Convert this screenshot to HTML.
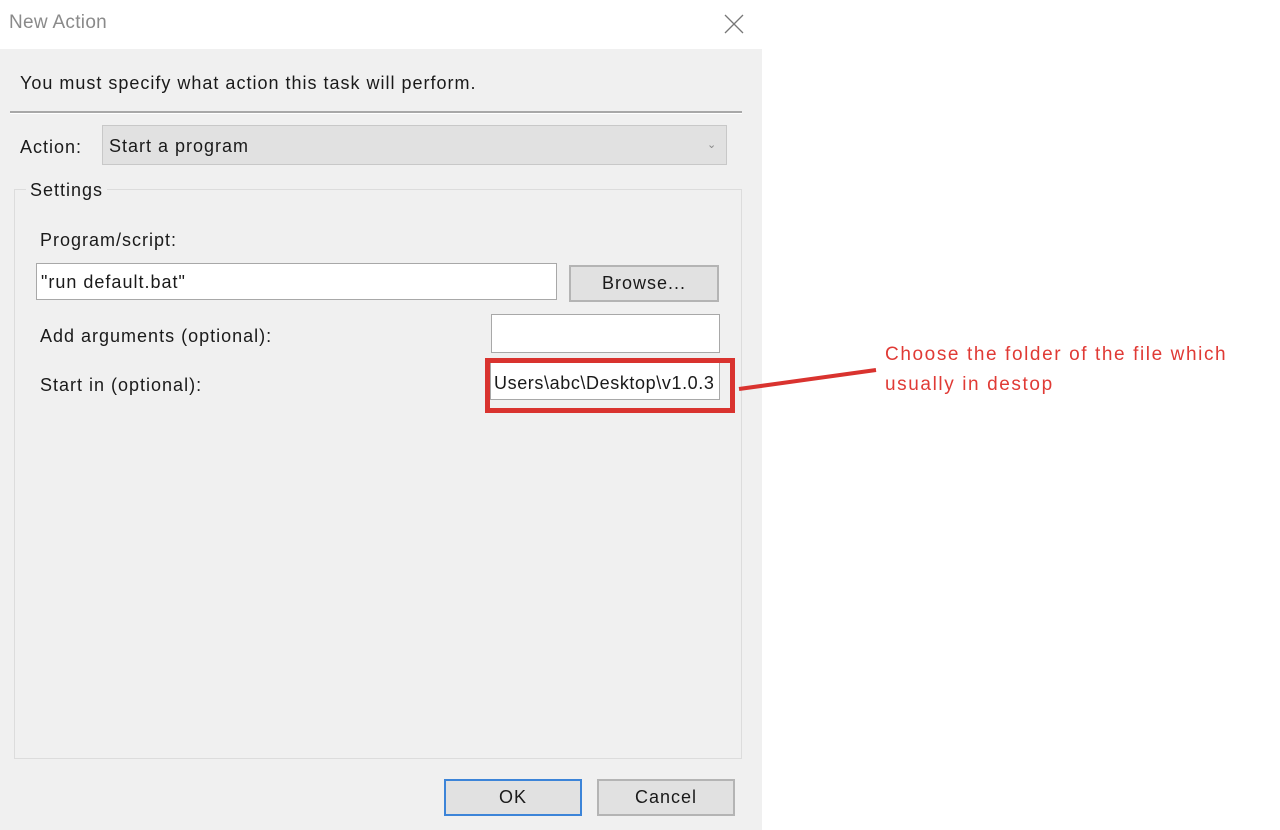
<!DOCTYPE html>
<html><head><style>
body{margin:0;width:1280px;height:830px;background:#fff;position:relative;overflow:hidden;font-family:"Liberation Sans",sans-serif;color:#1a1a1a}
.a{position:absolute}
.t{font-size:18px;white-space:nowrap;letter-spacing:1px}
.inp{position:absolute;background:#fff;border:1px solid #a8a8a8;box-sizing:border-box}
.btn{position:absolute;background:#e1e1e1;border:2px solid #b4b4b4;box-sizing:border-box;text-align:center;font-size:18px;letter-spacing:1px}
</style></head><body>
<div class="a t" style="left:9px;top:12px;color:#8a8a8a;font-size:19px;letter-spacing:0.3px">New Action</div>
<svg class="a" style="left:724px;top:14px" width="20" height="20"><path d="M1 1L19 19M19 1L1 19" stroke="#777" stroke-width="1.3"/></svg>
<div class="a" style="left:0;top:49px;width:762px;height:781px;background:#f0f0f0"></div>
<div class="a t" style="left:20px;top:73px">You must specify what action this task will perform.</div>
<div class="a" style="left:10px;top:111px;width:732px;height:2px;background:#a8a8a8"></div>
<div class="a" style="left:10px;top:113px;width:732px;height:1px;background:#fff"></div>
<div class="a t" style="left:20px;top:137px">Action:</div>
<div class="a" style="left:102px;top:125px;width:625px;height:40px;background:#e1e1e1;border:1px solid #c8c8c8;box-sizing:border-box"></div>
<div class="a t" style="left:109px;top:136px">Start a program</div>
<div class="a" style="left:707px;top:138px;font-size:11px;color:#888">&#8964;</div>
<div class="a" style="left:14px;top:189px;width:728px;height:570px;border:1px solid #dcdcdc;box-sizing:border-box"></div>
<div class="a t" style="left:26px;top:180px;background:#f0f0f0;padding:0 4px">Settings</div>
<div class="a t" style="left:40px;top:230px">Program/script:</div>
<div class="inp" style="left:36px;top:263px;width:521px;height:37px"></div>
<div class="a t" style="left:41px;top:272px">"run default.bat"</div>
<div class="btn" style="left:569px;top:265px;width:150px;height:37px;line-height:33px">Browse...</div>
<div class="a t" style="left:40px;top:326px">Add arguments (optional):</div>
<div class="inp" style="left:491px;top:314px;width:229px;height:39px"></div>
<div class="a t" style="left:40px;top:375px">Start in (optional):</div>
<div class="inp" style="left:490px;top:362px;width:230px;height:38px"></div>
<div class="a t" style="left:494px;top:373px;letter-spacing:0.6px">Users\abc\Desktop\v1.0.3</div>
<div class="a" style="left:485px;top:358px;width:250px;height:55px;border:5px solid #d9332f;box-sizing:border-box"></div>
<svg class="a" style="left:736px;top:364px" width="145" height="30"><path d="M3 25L140 6" stroke="#d9332f" stroke-width="4"/></svg>
<div class="a" style="left:885px;top:340px;font-size:19px;color:#e03a35;line-height:30px;letter-spacing:1.6px;white-space:nowrap">Choose the folder of the file which<br>usually in destop</div>
<div class="btn" style="left:444px;top:779px;width:138px;height:37px;line-height:33px;border-color:#3c84d8">OK</div>
<div class="btn" style="left:597px;top:779px;width:138px;height:37px;line-height:33px">Cancel</div>
</body></html>
